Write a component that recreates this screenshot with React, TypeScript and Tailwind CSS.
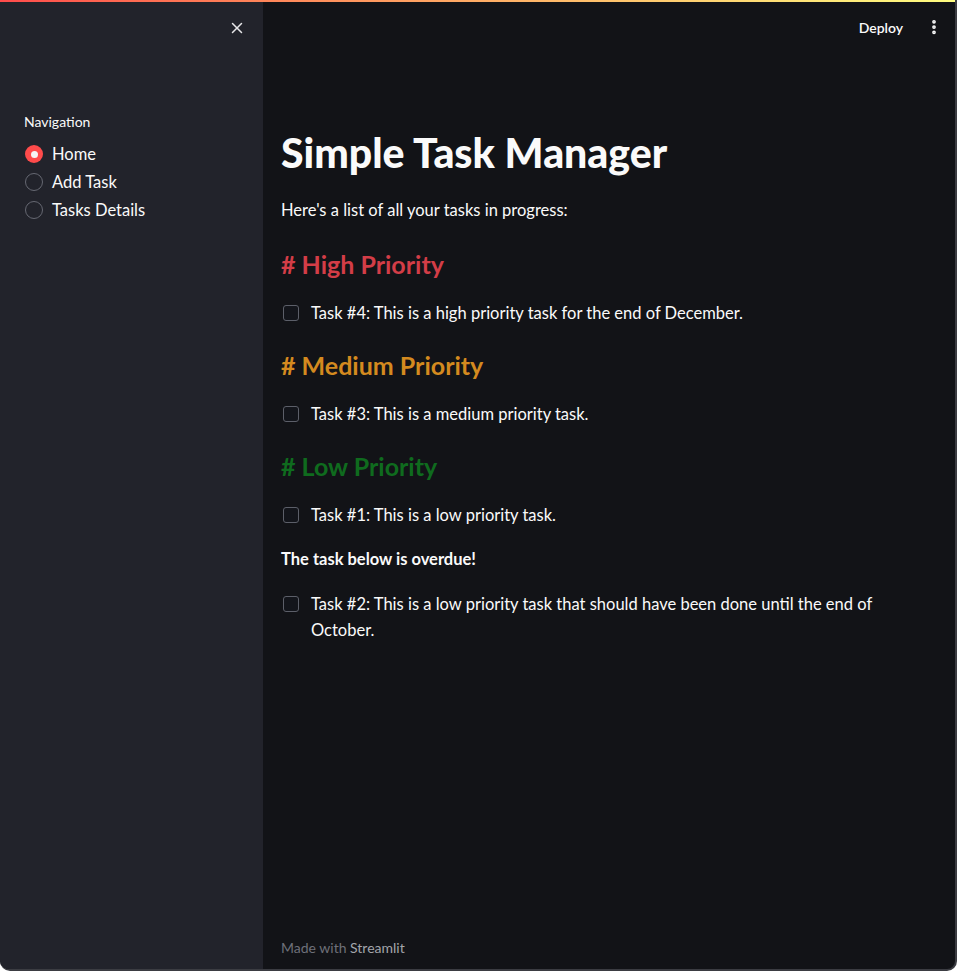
import React from 'react';
import { X, EllipsisVertical } from 'lucide-react';

const tasksHigh = ['Task #4: This is a high priority task for the end of December.'];
const tasksMedium = ['Task #3: This is a medium priority task.'];
const tasksLow = ['Task #1: This is a low priority task.'];

function TaskCheck({ label }: { label: string }) {
  return (
    <label className="flex items-start gap-3 text-[16.5px] leading-[26px] text-[#fafafa]">
      <span className="mt-[5px] ml-[2px] h-4 w-4 shrink-0 rounded-[3px] border border-[#5c5f69] bg-[#13151b]" />
      <span>{label}</span>
    </label>
  );
}

function Radio({ label, checked }: { label: string; checked?: boolean }) {
  return (
    <div className="flex h-7 items-center gap-[9px]">
      {checked ? (
        <span className="ml-[1px] flex h-[18px] w-[18px] items-center justify-center rounded-full bg-[#ff4b4b]">
          <span className="h-[7px] w-[7px] rounded-full bg-[#f5f5f5]" />
        </span>
      ) : (
        <span className="ml-[1px] h-[18px] w-[18px] rounded-full border border-[#666872]" />
      )}
      <span className="text-[16.5px] text-[#fafafa]">{label}</span>
    </div>
  );
}

export default function App() {
  return (
    <div
      className="relative flex h-[971px] w-[957px] overflow-hidden rounded-b-[10px] border-r-2 border-b-2 border-[#3b3c42] bg-[#121317]"
      style={{ fontFamily: 'Lato, "Noto Sans", sans-serif' }}
    >
      <div className="absolute left-0 right-0 top-0 z-10 h-[2px] bg-gradient-to-r from-[#ff4b4b] to-[#fffd80]" />

      <aside className="flex w-[263px] shrink-0 flex-col bg-[#22232b] px-6">
        <div className="flex h-[56px] items-center justify-end">
          <X size={18} strokeWidth={2} className="mr-[-7px] text-[#e6e6e8]" />
        </div>
        <div className="mt-[55px] text-[14px] text-[#fafafa]">Navigation</div>
        <div className="mt-[8px] flex flex-col">
          <Radio label="Home" checked />
          <Radio label="Add Task" />
          <Radio label="Tasks Details" />
        </div>
      </aside>

      <main className="flex flex-1 flex-col">
        <header className="flex h-[54px] items-center justify-end gap-[22px] pr-[12px]">
          <span className="text-[14px] font-semibold text-[#fafafa]">Deploy</span>
          <EllipsisVertical size={18} strokeWidth={3} className="text-[#fafafa]" />
        </header>

        <div className="flex flex-1 flex-col pl-[18px] pr-[40px]">
          <h1 className="mt-[72px] text-[41px] font-black leading-[54px] text-[#fafafa]">Simple Task Manager</h1>
          <p className="mt-[17px] text-[16.5px] leading-[26px] text-[#fafafa]">Here's a list of all your tasks in progress:</p>

          <h3 className="mt-[23px] text-[25px] font-bold leading-[36px] text-[#d33d47]"># High Priority</h3>
          <div className="mt-[18px] flex flex-col gap-4">
            {tasksHigh.map((t) => (
              <TaskCheck key={t} label={t} />
            ))}
          </div>

          <h3 className="mt-[21px] text-[25px] font-bold leading-[36px] text-[#d48a1f]"># Medium Priority</h3>
          <div className="mt-[18px] flex flex-col gap-4">
            {tasksMedium.map((t) => (
              <TaskCheck key={t} label={t} />
            ))}
          </div>

          <h3 className="mt-[21px] text-[25px] font-bold leading-[36px] text-[#0f6b1e]"># Low Priority</h3>
          <div className="mt-[18px] flex flex-col gap-4">
            {tasksLow.map((t) => (
              <TaskCheck key={t} label={t} />
            ))}
          </div>

          <p className="mt-[18px] text-[16.5px] font-bold leading-[26px] text-[#fafafa]">The task below is overdue!</p>
          <div className="mt-[19px]">
            <TaskCheck label="Task #2: This is a low priority task that should have been done until the end of October." />
          </div>

          <div className="mt-auto pb-[11px] text-[14px] leading-[20px] text-[#6e7079]">
            Made with <span className="text-[#a3a5ab]">Streamlit</span>
          </div>
        </div>
      </main>
    </div>
  );
}
